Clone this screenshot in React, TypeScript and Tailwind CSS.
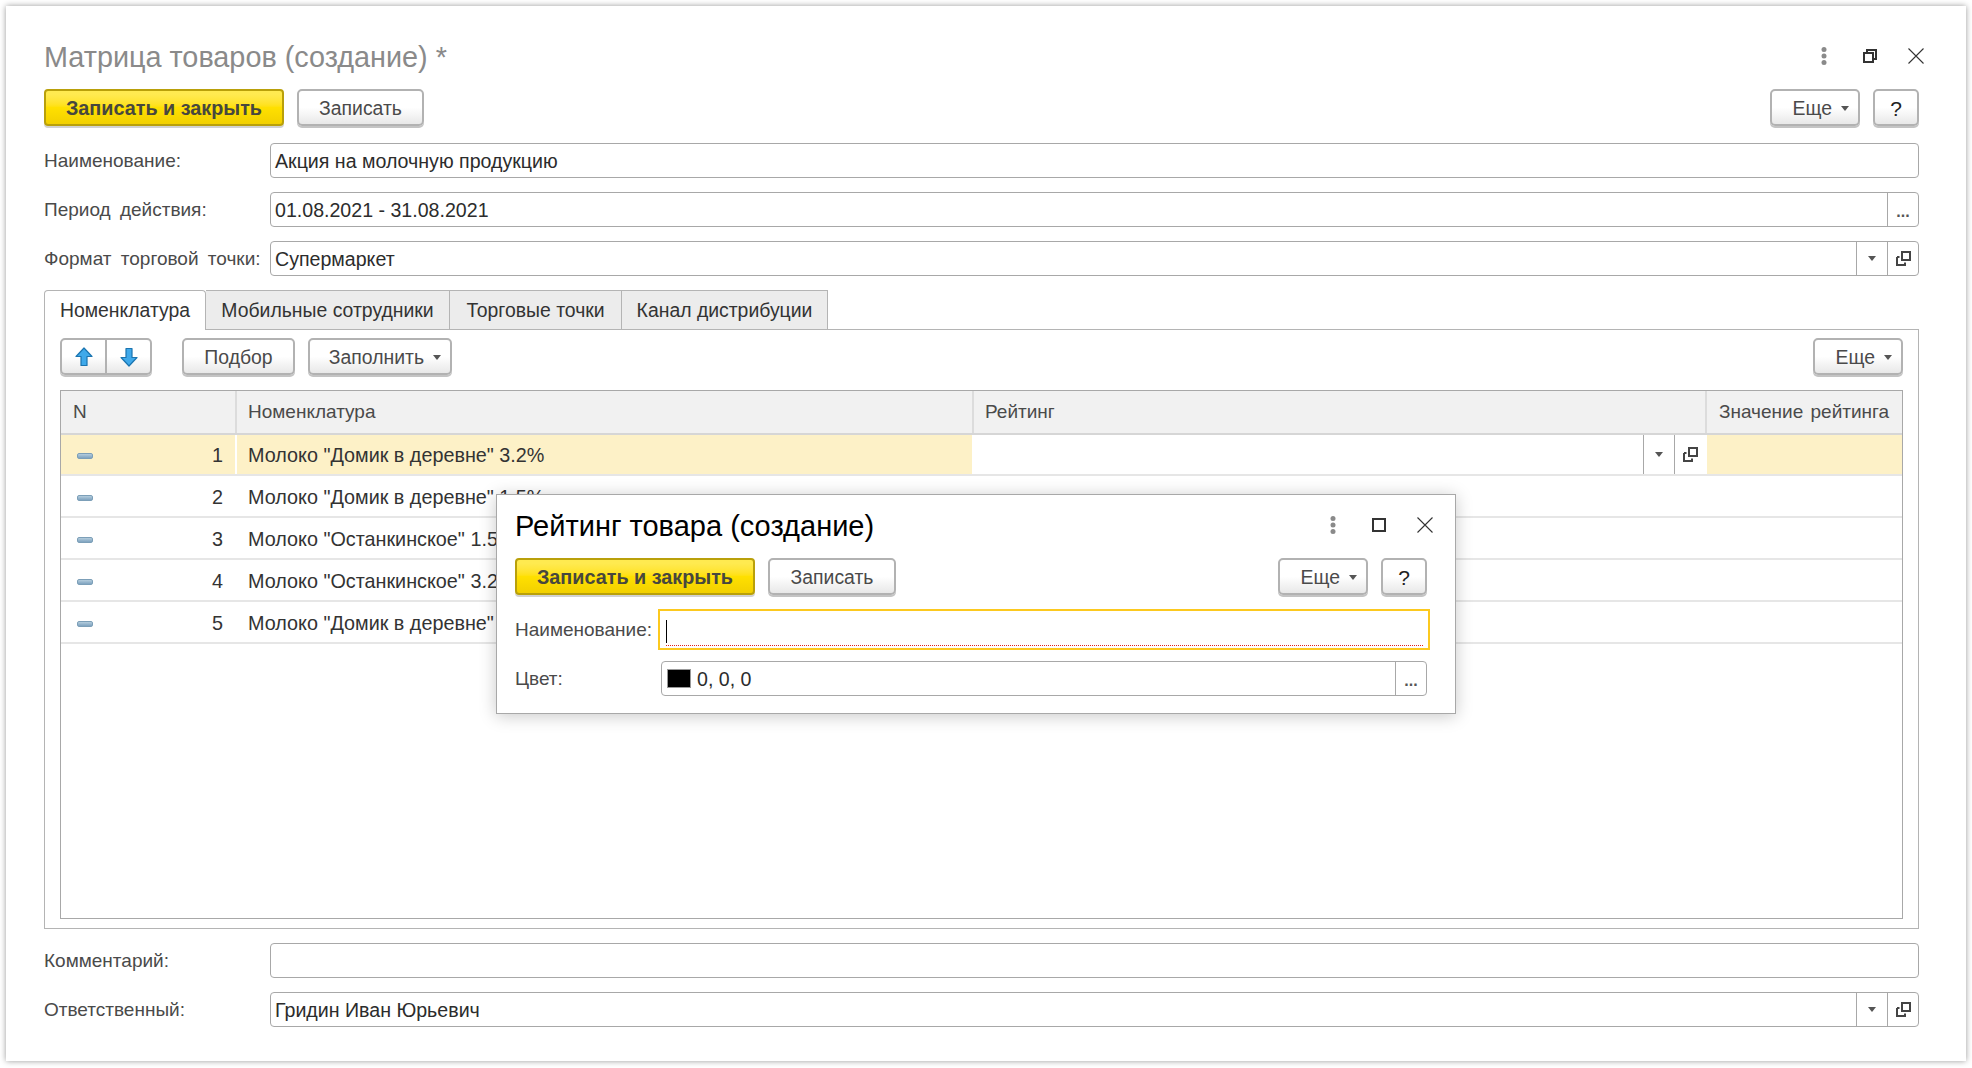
import React from 'react';

function Dots() {
	return (
		<svg width="16" height="18" viewBox="0 0 16 18" className="block">
			<circle cx="8" cy="2.6" r="2.5" fill="#8a8a8a" />
			<circle cx="8" cy="9" r="2.5" fill="#8a8a8a" />
			<circle cx="8" cy="15.4" r="2.5" fill="#8a8a8a" />
		</svg>
	);
}

function Cross() {
	return (
		<svg width="16" height="16" viewBox="0 0 16 16" className="block">
			<path d="M0.5 0.5L15.5 15.5M15.5 0.5L0.5 15.5" stroke="#333" strokeWidth="1.1" fill="none" />
		</svg>
	);
}

function Restore() {
	return (
		<svg width="16" height="14" viewBox="0 0 16 14" className="block">
			<path d="M2 4h9v9H2zM5 4V1h9v9h-3" stroke="#333" strokeWidth="2" fill="none" />
		</svg>
	);
}

function Maximize() {
	return (
		<svg width="16" height="14" viewBox="0 0 16 14" className="block">
			<rect x="2" y="1" width="12" height="12" stroke="#333" strokeWidth="2" fill="none" />
		</svg>
	);
}

function Caret() {
	return (
		<svg width="8" height="5" viewBox="0 0 8 5" className="block">
			<path d="M0 0h8L4 5z" fill="#555" />
		</svg>
	);
}

function OpenIcon() {
	return (
		<svg width="15" height="15" viewBox="0 0 15 15" className="block">
			<path d="M6 1h8v8H6zM1 6v8h8v-2.5M1 6h2.5" stroke="#444" strokeWidth="2" fill="none" />
		</svg>
	);
}

function ArrowUp() {
	return (
		<svg width="18" height="20" viewBox="0 0 18 20" className="block">
			<path d="M9 1L17 9.5H12V18.5H6V9.5H1Z" fill="#3fa9ea" stroke="#1a74b0" strokeWidth="1.2" strokeLinejoin="round" />
		</svg>
	);
}

function ArrowDown() {
	return (
		<svg width="18" height="20" viewBox="0 0 18 20" className="block">
			<path d="M9 19L17 10.5H12V1.5H6V10.5H1Z" fill="#3fa9ea" stroke="#1a74b0" strokeWidth="1.2" strokeLinejoin="round" />
		</svg>
	);
}

function RowMark() {
	return <div className="h-[6px] w-[16px] rounded-[2px] border border-[#7c9fb8] bg-linear-to-b from-[#b4cddd] to-[#7fa3bf]" />;
}

function Btn({ width, children, yellow, caret }: { width: string; children: React.ReactNode; yellow?: boolean; caret?: boolean }) {
	return (
		<div
			className={
				yellow
					? `mb-[2px] flex h-[37px] ${width} items-center justify-center rounded-[4px] border-2 border-[#b9a00a] bg-linear-to-b from-[#ffea50] from-10% via-[#ffe000] via-50% to-[#f2d000] pt-[2px] text-[19.8px] font-bold text-[#47473f] shadow-[0_2px_0_#d2d2d2]`
					: `mb-[2px] flex h-[37px] ${width} items-center ${caret ? 'justify-end pr-[9px]' : 'justify-center'} rounded-[5px] border-2 border-[#b2b2b2] bg-linear-to-b from-white from-50% to-[#e8e8e8] pt-[2px] text-[19.4px] text-[#4a4a4a] shadow-[0_2px_0_#c4c4c4]`
			}
		>
			{children}
			{caret && (
				<span className="ml-[9px]">
					<Caret />
				</span>
			)}
		</div>
	);
}

function HelpBtn() {
	return (
		<div className="mb-[2px] flex h-[37px] w-[46px] items-center justify-center rounded-[5px] border-2 border-[#b2b2b2] bg-linear-to-b from-white from-50% to-[#e8e8e8] pt-[2px] text-[21px] text-[#222] shadow-[0_2px_0_#c4c4c4]">
			?
		</div>
	);
}

function SideBtn({ children }: { children: React.ReactNode }) {
	return <div className="flex w-[31px] shrink-0 items-center justify-center self-stretch border-l border-[#a8a8a8]">{children}</div>;
}

function Ellipsis() {
	return <span className="mt-[4px] text-[16px] font-bold leading-none text-[#555]">...</span>;
}

function Field({ value, children }: { value?: string; children?: React.ReactNode }) {
	return (
		<div className="flex h-[35px] flex-1 items-center rounded-[4px] border border-[#a8a8a8] bg-white">
			<div className="flex-1 pl-[4px] pt-[2px] text-[19.6px] text-[#2c2c2c]">{value}</div>
			{children}
		</div>
	);
}

function FormRow({ label, children }: { label: string; children: React.ReactNode }) {
	return (
		<div className="flex items-center">
			<div className="w-[226px] shrink-0 pt-[2px] text-[19px] text-[#4a4a4a] [word-spacing:4px]">{label}</div>
			{children}
		</div>
	);
}

const rows = [
	{ n: 1, name: 'Молоко "Домик в деревне" 3.2%' },
	{ n: 2, name: 'Молоко "Домик в деревне" 1.5%' },
	{ n: 3, name: 'Молоко "Останкинское" 1.5%' },
	{ n: 4, name: 'Молоко "Останкинское" 3.2%' },
	{ n: 5, name: 'Молоко "Домик в деревне" 2.5%' },
];

const tabs = [
	{ title: 'Мобильные сотрудники', w: 'w-[244px]' },
	{ title: 'Торговые точки', w: 'w-[172px]' },
	{ title: 'Канал дистрибуции', w: 'w-[206px]' },
];

function Table() {
	return (
		<div className="mt-[13px] flex h-[529px] flex-col border border-[#a8a8a8]">
			<div className="grid h-[44px] shrink-0 grid-cols-[174px_737px_733px_1fr] border-b-2 border-[#d6d6d6] bg-[#f1f1f1] text-[19px] text-[#4a4a4a]">
				<div className="flex items-center pl-[12px]">N</div>
				<div className="flex items-center border-l-2 border-[#dcdcdc] pl-[11px]">Номенклатура</div>
				<div className="flex items-center border-l-2 border-[#dcdcdc] pl-[11px]">Рейтинг</div>
				<div className="flex items-center border-l-2 border-[#dcdcdc] pl-[12px] [word-spacing:2px]">Значение рейтинга</div>
			</div>
			{rows.map((r) => (
				<div key={r.n} className={`grid ${r.n === 1 ? 'h-[41px]' : 'h-[42px]'} shrink-0 grid-cols-[174px_737px_733px_1fr] border-b-2 border-[#e6e6e6] text-[19.8px] text-[#333]`}>
					<div className={`flex items-center justify-between pl-[16px] pr-[12px] ${r.n === 1 ? 'bg-[#fdf1c7] pt-[2px]' : 'pt-[4px]'}`}>
						<RowMark />
						<span>{r.n}</span>
					</div>
					<div className={`flex items-center pl-[11px] ${r.n === 1 ? 'border-l-2 border-white bg-[#fdf1c7] pt-[2px]' : 'ml-[2px] pt-[4px]'}`}>{r.name}</div>
					<div className="flex justify-end">
						{r.n === 1 && (
							<>
								<SideBtn>
									<Caret />
								</SideBtn>
								<SideBtn>
									<OpenIcon />
								</SideBtn>
							</>
						)}
					</div>
					<div className={r.n === 1 ? 'ml-[2px] bg-[#fdf1c7]' : ''} />
				</div>
			))}
		</div>
	);
}

function Dialog() {
	return (
		<div className="absolute left-[490px] top-[488px] h-[220px] w-[960px] border border-[#a8a8a8] bg-white pl-[18px] pr-[28px] pt-[11px] shadow-[0_2px_16px_rgba(0,0,0,0.22)]">
			<div className="flex h-[40px] items-center justify-between">
				<div className="pt-[1px] text-[29px] text-black">Рейтинг товара (создание)</div>
				<div className="-mr-[6px] -mt-[2px] flex items-center gap-[30px]">
					<Dots />
					<Maximize />
					<Cross />
				</div>
			</div>
			<div className="mt-[12px] flex items-start gap-[13px]">
				<Btn yellow width="w-[240px]">Записать и закрыть</Btn>
				<Btn width="w-[128px]">Записать</Btn>
				<div className="flex-1" />
				<Btn caret width="w-[90px]">Еще</Btn>
				<HelpBtn />
			</div>
			<div className="mt-[12px] flex items-center">
				<div className="w-[143px] shrink-0 pt-[2px] text-[19px] text-[#4a4a4a]">Наименование:</div>
				<div className="-mr-[3px] flex h-[41px] flex-1 items-center border-2 border-[#fcc91f] pl-[6px] pr-[5px]">
					<div className="h-[33px] flex-1 border-b border-dotted border-[#e02020]">
						<div className="mt-[7px] h-[23px] w-px bg-black" />
					</div>
				</div>
			</div>
			<div className="mt-[11px] flex items-center">
				<div className="w-[146px] shrink-0 pt-[2px] text-[19px] text-[#4a4a4a]">Цвет:</div>
				<div className="flex h-[35px] flex-1 items-center rounded-[4px] border border-[#a8a8a8]">
					<div className="ml-[5px] h-[19px] w-[24px] border border-[#999] bg-black" />
					<div className="flex-1 pl-[6px] pt-[2px] text-[19.6px] text-[#2c2c2c]">0, 0, 0</div>
					<SideBtn>
						<Ellipsis />
					</SideBtn>
				</div>
			</div>
		</div>
	);
}

export default function App() {
	return (
		<div className="h-[1068px] w-[1972px] overflow-hidden bg-white pl-[6px] pt-[6px] font-['Liberation_Sans',Arial,sans-serif]">
			<div className="relative h-[1055px] w-[1960px] bg-white pl-[38px] pr-[47px] pt-[30px] shadow-[0_0_6px_rgba(0,0,0,0.4)]">
				<div className="flex h-[42px] items-center justify-between">
					<div className="pt-[2px] text-[28.8px] text-[#8a8a8a]">Матрица товаров (создание) *</div>
					<div className="-mr-[5px] -mt-[2px] flex items-center gap-[30px]">
						<Dots />
						<Restore />
						<Cross />
					</div>
				</div>

				<div className="mt-[11px] flex items-start gap-[13px]">
					<Btn yellow width="w-[240px]">Записать и закрыть</Btn>
					<Btn width="w-[127px]">Записать</Btn>
					<div className="flex-1" />
					<Btn caret width="w-[90px]">Еще</Btn>
					<HelpBtn />
				</div>

				<div className="mt-[15px] flex flex-col gap-[14px]">
					<FormRow label="Наименование:">
						<Field value="Акция на молочную продукцию" />
					</FormRow>
					<FormRow label="Период действия:">
						<Field value="01.08.2021 - 31.08.2021">
							<SideBtn>
								<Ellipsis />
							</SideBtn>
						</Field>
					</FormRow>
					<FormRow label="Формат торговой точки:">
						<Field value="Супермаркет">
							<SideBtn>
								<Caret />
							</SideBtn>
							<SideBtn>
								<OpenIcon />
							</SideBtn>
						</Field>
					</FormRow>
				</div>

				<div className="mt-[14px] flex h-[40px] text-[19.4px] text-[#333]">
					<div className="flex w-[162px] items-center justify-center rounded-t-[4px] border-x border-t border-[#b4b4b4] bg-white pt-px">Номенклатура</div>
					{tabs.map((t) => (
						<div key={t.title} className={`flex ${t.w} items-center justify-center border-b border-r border-t border-[#b4b4b4] bg-[#ececec] pt-px`}>
							{t.title}
						</div>
					))}
					<div className="flex-1 border-b border-[#b4b4b4]" />
				</div>

				<div className="h-[599px] border-x border-b border-[#b4b4b4] px-[15px] pt-[8px]">
					<div className="flex items-start">
						<div className="mb-[2px] flex h-[37px] w-[92px] rounded-[5px] border-2 border-[#b2b2b2] bg-linear-to-b from-white from-50% to-[#e8e8e8] shadow-[0_2px_0_#c4c4c4]">
							<div className="flex flex-1 items-center justify-center border-r-2 border-[#b2b2b2]">
								<ArrowUp />
							</div>
							<div className="flex flex-1 items-center justify-center">
								<ArrowDown />
							</div>
						</div>
						<div className="ml-[30px]">
							<Btn width="w-[113px]">Подбор</Btn>
						</div>
						<div className="ml-[13px]">
							<Btn caret width="w-[144px]">Заполнить</Btn>
						</div>
						<div className="flex-1" />
						<Btn caret width="w-[90px]">Еще</Btn>
					</div>
					<Table />
				</div>

				<div className="mt-[14px] flex flex-col gap-[14px]">
					<FormRow label="Комментарий:">
						<Field />
					</FormRow>
					<FormRow label="Ответственный:">
						<Field value="Гридин Иван Юрьевич">
							<SideBtn>
								<Caret />
							</SideBtn>
							<SideBtn>
								<OpenIcon />
							</SideBtn>
						</Field>
					</FormRow>
				</div>

				<Dialog />
			</div>
		</div>
	);
}
